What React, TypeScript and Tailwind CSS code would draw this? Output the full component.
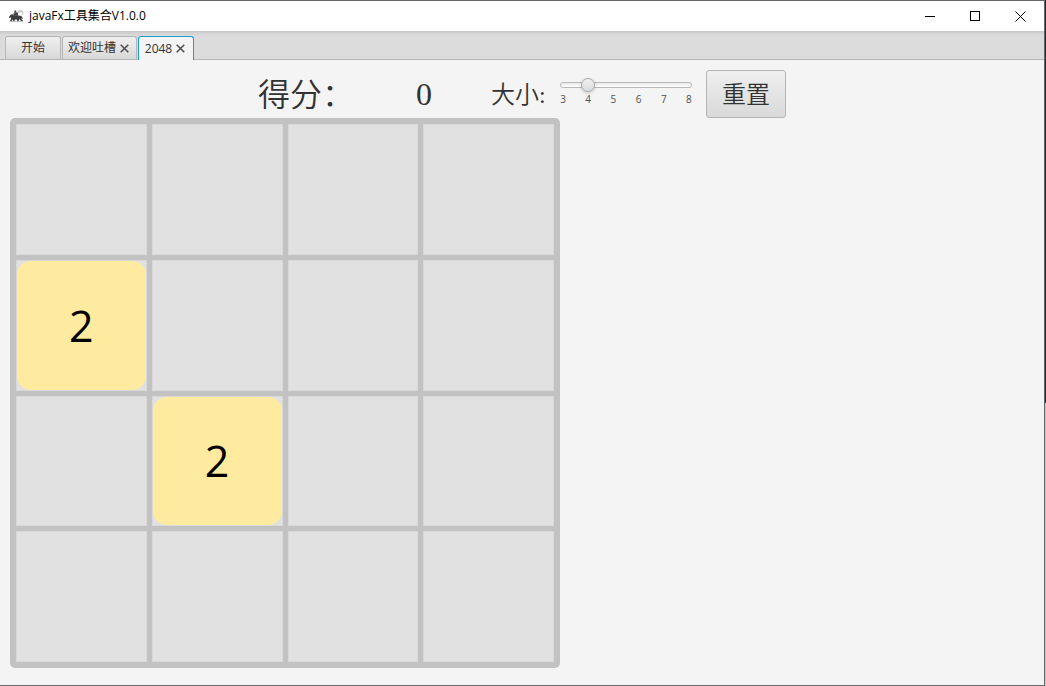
import { useState } from "react";

type Tile = { row: number; col: number; value: number };

const START_TILES: Tile[] = [
  { row: 1, col: 0, value: 2 },
  { row: 2, col: 1, value: 2 },
];

const SIZES = [3, 4, 5, 6, 7, 8];

function AppIcon() {
  return (
    <svg width="16" height="14" viewBox="0 0 16 14" fill="#3c3c3c" aria-hidden="true">
      {/* rider */}
      <path d="M6.500 1.500h1.700v1.600L10 4.200v2.600H5.500V4.300l1-.9Z" />
      {/* horse */}
      <path d="M.8 8.200 2.800 5.400l1.500-.2L6 6.400h5.500l2 .8 1.500 2-.6.5-1-.8.3 1.500 1.100 1.200v.6h-1.700l-1.300-1.700-.8-.2-.3 1.900H9.200l-.3-1.700H7l-.6 1.700H4.800l.3-1.800-.9.4-.4 1.400H2l.9-2.300.3-1.700-1.700.7Z" />
      <path d="M9.500 2.600c1.500-1.100 4-1.100 5 .2.700 1 .3 2.200-.4 3M6 4.300l8.500-2" fill="none" stroke="#9a9a9a" strokeWidth=".7" />
      <path d="M1 12.400h14" stroke="#b0b0b0" strokeWidth=".8" />
    </svg>
  );
}

function CloseMark() {
  return (
    <svg width="9" height="9" viewBox="0 0 9 9" stroke="#4c4c4c" strokeWidth="1.500" aria-hidden="true">
      <path d="M.7.7 8.300 8.300M8.300.7.7 8.300" />
    </svg>
  );
}

function TitleBar() {
  return (
    <header className="flex h-[30px] items-center bg-white pl-2 text-black">
      <AppIcon />
      <h1 className="flex-1 pl-[5px] text-[12px] leading-4">javaFx工具集合V1.0.0</h1>
      <button type="button" aria-label="最小化" className="flex h-full w-[46px] items-center justify-center">
        <svg width="10" height="10" stroke="currentColor" aria-hidden="true">
          <path d="M0 5.500h10" />
        </svg>
      </button>
      <button type="button" aria-label="最大化" className="flex h-full w-[44px] items-center justify-center">
        <svg width="10" height="10" fill="none" stroke="currentColor" aria-hidden="true">
          <rect x=".5" y=".5" width="9" height="9" />
        </svg>
      </button>
      <button type="button" aria-label="关闭" className="flex h-full w-[47px] items-center justify-center">
        <svg width="11" height="11" stroke="currentColor" aria-hidden="true">
          <path d="M.5.5l10 10M10.500.5l-10 10" />
        </svg>
      </button>
    </header>
  );
}

function TabBar() {
  const idle =
    "flex h-[23px] items-center justify-center rounded-t-[3px] border border-b-0 border-[#b5b5b5] bg-linear-to-b from-[#efefef] to-[#d9d9d9]";

  return (
    <nav className="flex h-[29px] items-end gap-px border-b border-[#b5b5b5] bg-[#dcdcdc] pl-[5px] text-[12px] leading-4 text-[#323232] shadow-[inset_0_4px_4px_-3px_#bdbdbd]">
      <button type="button" className={`${idle} w-14`}>
        开始
      </button>
      <div className={`${idle} w-[75px] gap-1 pr-0.5`}>
        <button type="button">欢迎吐槽</button>
        <button type="button" aria-label="关闭 欢迎吐槽">
          <CloseMark />
        </button>
      </div>
      <div className="-mb-px flex h-6 w-14 items-center justify-center gap-1 rounded-t-[3px] border border-b-0 border-[#1a9fc9] bg-[#f4f4f4] pr-0.5">
        <button type="button" aria-current="page">
          2048
        </button>
        <button type="button" aria-label="关闭 2048">
          <CloseMark />
        </button>
      </div>
    </nav>
  );
}

function SizeSlider({ size, onChange }: { size: number; onChange: (size: number) => void }) {
  return (
    <div className="w-[140px]">
      <div className="grid items-center">
        <div className="col-start-1 row-start-1 mx-1 h-[6px] rounded-full border border-[#bababa] bg-linear-to-b from-[#e8e8e8] to-white" />
        <input
          id="size"
          type="range"
          min={3}
          max={8}
          value={size}
          onChange={(e) => onChange(Number(e.target.value))}
          className="col-start-1 row-start-1 m-0 h-[14px] w-full appearance-none bg-transparent [&::-webkit-slider-thumb]:h-[14px] [&::-webkit-slider-thumb]:w-[14px] [&::-webkit-slider-thumb]:appearance-none [&::-webkit-slider-thumb]:rounded-full [&::-webkit-slider-thumb]:border [&::-webkit-slider-thumb]:border-[#a8a8a8] [&::-webkit-slider-thumb]:bg-linear-to-b [&::-webkit-slider-thumb]:from-[#f0f0f0] [&::-webkit-slider-thumb]:to-[#dcdcdc] [&::-webkit-slider-thumb]:shadow-[0_1px_3px_#00000033]"
        />
      </div>
      <div className="flex justify-between text-[10px] leading-[14px] text-[#505050]">
        {SIZES.map((n) => (
          <span key={n} className="w-[14px] text-center">
            {n}
          </span>
        ))}
      </div>
    </div>
  );
}

function Board({ size, tiles }: { size: number; tiles: Tile[] }) {
  const cells = Array.from({ length: size * size }, (_, i) =>
    tiles.find((t) => t.row === Math.floor(i / size) && t.col === i % size),
  );

  return (
    <div
      className="grid aspect-square w-full max-w-[550px] gap-[5px] rounded-[5px] border-6 border-[#c2c2c2] bg-[#c2c2c2]"
      style={{
        gridTemplateColumns: `repeat(${size}, minmax(0, 1fr))`,
        gridTemplateRows: `repeat(${size}, minmax(0, 1fr))`,
      }}
    >
      {cells.map((tile, i) => (
        <div key={i} className="border border-[#d9d9d9] bg-[#e1e1e1]">
          {tile && (
            <div className="flex h-full items-center justify-center rounded-[14px] bg-[#ffeb9f] text-[43px] leading-none text-black">
              {tile.value}
            </div>
          )}
        </div>
      ))}
    </div>
  );
}

export default function App() {
  const [size, setSize] = useState(4);
  const [tiles, setTiles] = useState(START_TILES);

  return (
    <div className="flex min-h-screen flex-col bg-linear-to-b from-[#25282b] from-[403px] to-[#c8c8c8] to-[403px] pr-px font-['Open_Sans','Noto_Sans_CJK_SC',sans-serif]">
      <div className="flex flex-1 flex-col border-y border-r border-[#67676a] bg-[#f4f4f4]">
        <TitleBar />
        <TabBar />
        <main className="px-[10px] pt-[10px] pb-4 text-[#323232]">
          <div className="flex h-12 items-center pl-[248px] font-['Liberation_Serif','Noto_Sans_CJK_SC',serif] text-[24px] leading-8 font-[350]">
            <span className="w-[158px] pt-0.5 text-[32px]">得分：</span>
            <output className="w-[75px] text-[32px]">0</output>
            <label htmlFor="size" className="w-[65px] pt-0.5">
              大小:
            </label>
            <div className="self-start pt-2 font-['Open_Sans',sans-serif] font-normal">
              <SizeSlider size={size} onChange={setSize} />
            </div>
            <button
              type="button"
              onClick={() => setTiles([...START_TILES])}
              className="ml-[10px] h-12 w-20 rounded-[3px] border border-[#b5b5b5] bg-linear-to-b from-[#efefef] to-[#d9d9d9] pt-0.5"
            >
              重置
            </button>
          </div>
          <Board size={size} tiles={tiles} />
        </main>
      </div>
    </div>
  );
}
